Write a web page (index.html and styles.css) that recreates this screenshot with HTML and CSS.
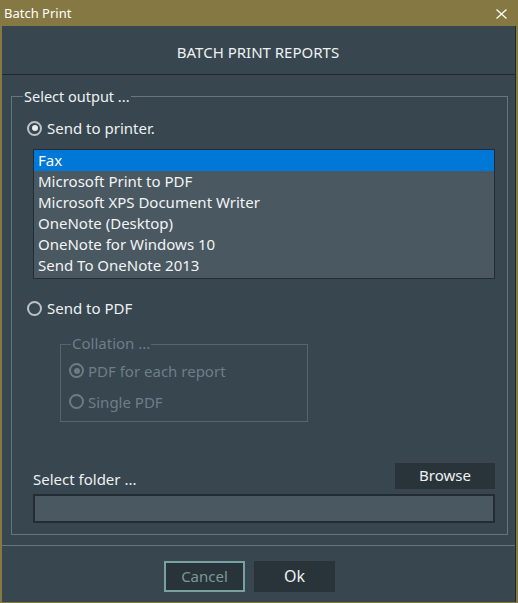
FILE: index.html
```html
<!DOCTYPE html>
<html>
<head>
<meta charset="utf-8">
<link rel="stylesheet" href="styles.css">
</head>
<body>
<div class="window">
  <div class="titlebar">
    <span class="title">Batch Print</span>
    <svg class="close" width="11" height="10" viewBox="0 0 11 10"><path d="M0.5 0.5 L10.5 9.5 M10.5 0.5 L0.5 9.5" stroke="#ffffff" stroke-width="1.2" fill="none"/></svg>
  </div>
  <div class="client">
    <div class="header">BATCH PRINT REPORTS</div>
    <div class="group">
      <span class="legend">Select output ...</span>
      <div class="row first"><span class="radio checked"></span><span>Send to printer.</span></div>
      <ul class="list">
        <li class="selected">Fax</li>
        <li>Microsoft Print to PDF</li>
        <li>Microsoft XPS Document Writer</li>
        <li>OneNote (Desktop)</li>
        <li>OneNote for Windows 10</li>
        <li>Send To OneNote 2013</li>
      </ul>
      <div class="row pdf"><span class="radio"></span><span>Send to PDF</span></div>
      <div class="collation">
        <span class="legend disabled">Collation ...</span>
        <div class="crow"><span class="radio checked dis"></span><span>PDF for each report</span></div>
        <div class="crow"><span class="radio dis"></span><span>Single PDF</span></div>
      </div>
      <div class="folder-row">
        <span class="folder-label">Select folder ...</span>
        <button class="btn browse">Browse</button>
      </div>
      <div class="input"></div>
    </div>
    <div class="footer">
      <button class="btn cancel">Cancel</button>
      <button class="btn ok">Ok</button>
    </div>
  </div>
</div>
</body>
</html>
```
FILE: styles.css
```css
* { box-sizing: border-box; }
html, body { margin: 0; padding: 0; }
body {
  font-family: "Noto Sans", "Open Sans", sans-serif;
  background: #857843;
}
.window {
  width: 518px;
  height: 603px;
  background: #857843;
  display: flex;
  flex-direction: column;
}
.titlebar {
  height: 26px;
  display: flex;
  align-items: center;
  justify-content: space-between;
  padding: 0 11px 0 4px;
  color: #ffffff;
  font-size: 13px;
}
.close { display: block; margin-top: 1px; }
.client {
  height: 576px;
  margin: 0 2px 0 2px;
  background: #37464f;
  border-right: 1px solid #1f282d;
  color: #eef1f2;
  display: flex;
  flex-direction: column;
}
.header {
  height: 49px;
  border-bottom: 1px solid #1f292f;
  display: flex;
  align-items: center;
  justify-content: center;
  font-size: 15px;
  padding-top: 3px;
  padding-right: 1px;
}
.group {
  position: relative;
  margin: 21px 7px 0 9px;
  border: 1px solid #65767e;
  padding: 20px 12px 11px 15px;
  height: 439px;
}
.legend {
  position: absolute;
  top: -11px;
  left: 11px;
  padding: 0 1px;
  background: #37464f;
  font-size: 14.5px;
  line-height: 20px;
}
.legend.disabled { color: #6e7f87; }
.row {
  height: 22px;
  display: flex;
  align-items: center;
  font-size: 15px;
}
.radio {
  width: 15px;
  height: 15px;
  border: 2px solid #bcc3c7;
  border-radius: 50%;
  margin-right: 5px;
  flex: none;
  position: relative;
}
.radio.checked::after {
  content: "";
  position: absolute;
  left: 2.5px;
  top: 2.5px;
  width: 6px;
  height: 6px;
  border-radius: 50%;
  background: #e9eced;
}
.radio.dis { border-color: #6b7c84; }
.radio.dis.checked::after { background: #6b7c84; }
.list {
  list-style: none;
  margin: 10px 0 0 6px;
  padding: 0;
  height: 130px;
  background: #4a5861;
  border: 1px solid #222c32;
  font-size: 15px;
}
.list li {
  height: 21px;
  line-height: 21px;
  padding-left: 4px;
  color: #f2f4f5;
}
.list li.selected { background: #0078d7; color: #ffffff; }
.row.pdf { margin-top: 18px; }
.collation {
  position: relative;
  margin: 25px 0 0 33px;
  width: 248px;
  height: 78px;
  border: 1px solid #56666e;
  padding: 10px 0 0 8px;
  color: #6e7f87;
}
.collation .legend { left: 10px; font-size: 15px; top: -12px; }
.crow {
  height: 31px;
  display: flex;
  align-items: center;
  font-size: 15px;
}
.crow .radio { margin-right: 4px; }
.folder-row {
  margin: 41px 0 0 6px;
  display: flex;
  align-items: flex-end;
  justify-content: space-between;
}
.folder-label {
  font-size: 15px;
  line-height: 20px;
}
.btn {
  font-family: inherit;
  font-size: 15px;
  color: #eef1f2;
  background: #29343a;
  border: none;
  padding: 0;
  margin: 0;
}
.browse {
  width: 100px;
  height: 26px;
  padding-bottom: 2px;
}
.input {
  margin: 5px 0 0 6px;
  height: 29px;
  background: #4a5861;
  border: 2px solid #222c32;
}
.footer {
  margin-top: 10px;
  border-top: 1px solid #65767e;
  flex: 1;
  display: flex;
  justify-content: center;
  align-items: flex-start;
  gap: 9px;
  padding: 15px 18px 0 0;
}
.cancel {
  width: 81px;
  height: 31px;
  border: 2px solid #78a1a2;
  color: #7b9898;
  padding-bottom: 2px;
}
.ok {
  width: 81px;
  height: 31px;
  font-size: 16px;
  padding-bottom: 2px;
}
```
